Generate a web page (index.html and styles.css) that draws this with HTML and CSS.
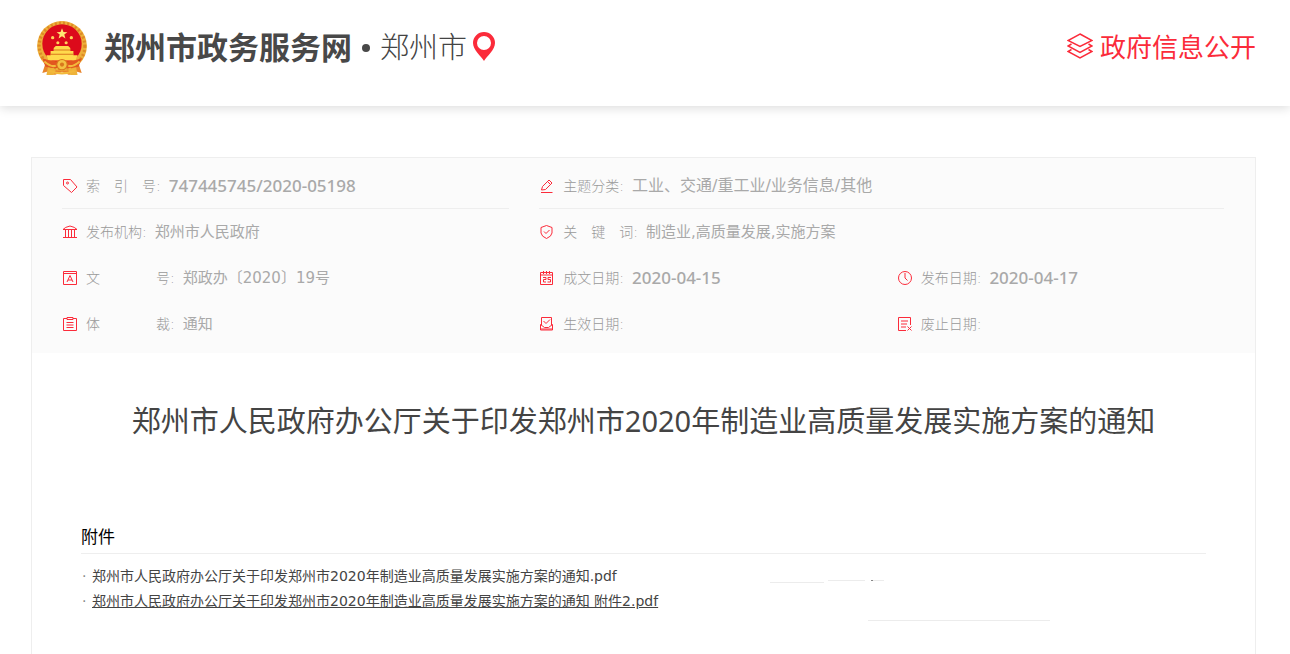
FILE: index.html
```html
<!DOCTYPE html>
<html lang="zh-CN">
<head>
    <meta charset="UTF-8">
    <meta name="viewport" content="width=device-width, initial-scale=1.0">
    <title>郑州市政务服务网</title>
    <link rel="stylesheet" href="styles.css">
</head>
<body>

    <header class="header">
        <div class="brand">
            <svg class="emblem" viewBox="0 0 50 54">
                <path d="M10 39 L6 51 L14 49 L18 53 L25 50 L32 53 L36 49 L44 51 L40 39Z" fill="#e8842a"/>
                <path d="M12 42 L10 53 H17 L20 46 M38 42 L40 53 H33 L30 46" fill="#eeb33a"/>
                <circle cx="25" cy="25" r="24" fill="#eeb03a"/>
                <circle cx="25" cy="25" r="22" fill="none" stroke="#de8a26" stroke-width="3" stroke-dasharray="2 2"/>
                <circle cx="25" cy="23" r="19" fill="#dc0a1b"/>
                <path d="M25 8 l1.4 3.6 3.8.1-3 2.4 1.1 3.7-3.3-2.1-3.3 2.1 1.1-3.7-3-2.4 3.8-.1z" fill="#ffe873"/>
                <g fill="#ffd35a">
                    <circle cx="16" cy="17" r="1.6"/>
                    <circle cx="34" cy="17" r="1.6"/>
                    <circle cx="21" cy="22" r="1.5"/>
                    <circle cx="29" cy="22" r="1.5"/>
                </g>
                <path d="M17 27 L19 25 H31 L33 27 V30 H36 V34 H40 L38 39 H12 L10 34 H14 V30 H17Z" fill="#ffda4c"/>
                <path d="M17 29 H33 M14 33 H36" stroke="#d9781c" stroke-width="1"/>
                <path d="M6 37 Q16 41 25 39 Q34 41 44 37 L41 45 Q33 47 25 46 Q17 47 9 45Z" fill="#e2571f"/>
                <circle cx="25" cy="43" r="5" fill="#f4c143" stroke="#d9781c"/>
                <circle cx="25" cy="43" r="2" fill="#d9781c"/>
                <path d="M8 40 Q15 46 19 44 M42 40 Q35 46 31 44 M13 49 Q25 54 37 49" stroke="#f2b93c" stroke-width="2" fill="none"/>
            </svg>
            <h1 class="site-name">郑州市政务服务网</h1>
            <span class="dot"></span>
            <span class="city">郑州市</span>
            <svg class="pin" viewBox="0 0 22 29">
                <path fill="#fb2b3a" fill-rule="evenodd" d="M11 0 A11 11 0 0 0 0 11 C0 18 8 24 11 29 C14 24 22 18 22 11 A11 11 0 0 0 11 0Z M11 4 A7 7 0 1 1 11 18 A7 7 0 1 1 11 4Z"/>
            </svg>
        </div>
        <a class="open-info" href="#">
            <svg class="layers" viewBox="0 0 26 26">
                <path d="M13 1 L25 7.5 L13 13.500 L1 7.500Z M4.500 11 L1 13 L13 19.500 L25 13 L21.500 11 M4.500 16.500 L1 18.500 L13 25 L25 18.500 L21.500 16.500"/>
            </svg>
            政府信息公开
        </a>
    </header>

    <main class="doc">
        <dl class="info">
            <div class="item line">
                <svg class="icon" viewBox="0 0 16 16"><path d="M1.500 1.500 H8.500 L15 9 L9.500 14.500 L1.500 7.500Z"/><circle cx="5.500" cy="5" r="1"/></svg>
                <dt>索&emsp;引&emsp;号:</dt>
                <dd class="num">747445745/2020-05198</dd>
            </div>
            <div class="item line span">
                <svg class="icon" viewBox="0 0 16 16"><path d="M2.500 12 L3.500 8.500 L10 2 L13 5 L6.500 11.500Z M8.500 3.500 L11.500 6.500 M2 14.500 H13.500"/></svg>
                <dt>主题分类:</dt>
                <dd class="wide">工业、交通/重工业/业务信息/其他</dd>
            </div>
            <div class="item">
                <svg class="icon" viewBox="0 0 16 16"><path d="M1 5.500 Q3 3 8 2 Q13 3 15 5.500Z M3.500 6 V13 M6.500 6 V13 M9.500 6 V13 M12.500 6 V13 M1 13.500 H15"/></svg>
                <dt>发布机构:</dt>
                <dd>郑州市人民政府</dd>
            </div>
            <div class="item span">
                <svg class="icon" viewBox="0 0 16 16"><path d="M7.500 1.500 L13 3.500 V9 Q12.500 12.500 7.500 14.500 Q2.500 12.500 2 9 V3.500Z M5 7.500 L7 9.500 L10.500 6"/></svg>
                <dt>关&emsp;键&emsp;词:</dt>
                <dd>制造业,高质量发展,实施方案</dd>
            </div>
            <div class="item">
                <svg class="icon" viewBox="0 0 16 16"><path d="M1.500 1.500 H14.500 V14.500 H1.500Z M2 3.500 H14 M5 12 L8 5.500 L11 12 M6 10 H10"/></svg>
                <dt>文&emsp;&emsp;&emsp;&emsp;号:</dt>
                <dd>郑政办〔2020〕19号</dd>
            </div>
            <div class="item">
                <svg class="icon" viewBox="0 0 16 16"><path d="M1.500 2.500 H13.500 V14.500 H1.500Z M1.500 5 H13.500 M4.500 1 V4 M7.500 1 V4 M10.500 1 V4 M4 7.500 H7 V9.500 H4.500 V12 H7 M12 7.500 H9 V9.500 H11.500 V12 H8.500"/></svg>
                <dt>成文日期:</dt>
                <dd class="num">2020-04-15</dd>
            </div>
            <div class="item">
                <svg class="icon" viewBox="0 0 16 16"><circle cx="8" cy="8" r="6.500"/><path d="M8 3 V8 L10.500 10.500"/></svg>
                <dt>发布日期:</dt>
                <dd class="num">2020-04-17</dd>
            </div>
            <div class="item">
                <svg class="icon" viewBox="0 0 16 16"><path d="M5 2.500 H1.500 V14.500 H14.500 V2.500 H11 M5 1.500 H11 V3.500 H5Z M4.500 6.500 H11.500 M4.500 9 H11.500 M4.500 11.500 H11.500"/></svg>
                <dt>体&emsp;&emsp;&emsp;&emsp;裁:</dt>
                <dd>通知</dd>
            </div>
            <div class="item">
                <svg class="icon" viewBox="0 0 16 16"><path d="M2.500 9 V1.500 H12.500 V9 M4.500 5 L7 7.500 L11 3.500 M1.500 8.500 V14 H13.500 V8.500 L9.500 11.500 H5.500Z M2 13 H13"/></svg>
                <dt>生效日期:</dt>
                <dd></dd>
            </div>
            <div class="item">
                <svg class="icon" viewBox="0 0 16 16"><path d="M9 14.500 H1.500 V1.500 H13.500 V9 M4 5 H11 M4 8 H10 M4 11 H9 M10.500 10.500 L14.500 14.500 M14.500 10.500 L10.500 14.500"/></svg>
                <dt>废止日期:</dt>
                <dd></dd>
            </div>
        </dl>

        <h2 class="title">郑州市人民政府办公厅关于印发郑州市2020年制造业高质量发展实施方案的通知</h2>

        <section class="attach">
            <h3>附件</h3>
            <div class="attach-body">
                <ul>
                    <li><a href="#">郑州市人民政府办公厅关于印发郑州市2020年制造业高质量发展实施方案的通知.pdf</a></li>
                    <li><a class="active" href="#">郑州市人民政府办公厅关于印发郑州市2020年制造业高质量发展实施方案的通知 附件2.pdf</a></li>
                </ul>
                <svg class="strokes" viewBox="0 0 282 58">
                    <path d="M0 18.500 H54 M58 16.500 H95 M102 16.500 H114 M98 56.500 H280" stroke="#ececec"/>
                    <path d="M101 16.500 H103" stroke="#888"/>
                </svg>
            </div>
        </section>
    </main>

</body>
</html>
```
FILE: styles.css
```css
* {
    box-sizing: border-box;
    margin: 0;
    padding: 0;
}

body {
    display: flex;
    flex-direction: column;
    min-height: 100vh;
    background: #fff;
    color: #444;
    font-family: "DejaVu Sans", "Noto Sans CJK SC", sans-serif;
}

svg {
    flex: none;
}

a {
    color: inherit;
    text-decoration: none;
}

/* header */
.header {
    display: flex;
    justify-content: space-between;
    height: 106px;
    padding: 20px 34px 0 36px;
    box-shadow: 0 2px 10px rgba(0, 0, 0, 0.14);
}

.brand,
.open-info {
    display: flex;
    align-items: center;
    height: 56px;
}

.emblem {
    width: 52px;
    height: 56px;
    margin-right: 16px;
}

.site-name {
    font-size: 31px;
    line-height: 56px;
    font-weight: bold;
    color: #484848;
}

.dot {
    width: 8px;
    height: 8px;
    margin: 0 10px;
    border-radius: 50%;
    background: #484848;
}

.city {
    font-size: 29px;
    line-height: 56px;
    font-weight: 300;
}

.pin {
    width: 22px;
    height: 29px;
    margin-left: 6px;
    margin-bottom: 4px;
}

.open-info {
    gap: 7px;
    font-size: 26px;
    line-height: 56px;
    color: #fb2b3a;
}

.layers {
    width: 26px;
    height: 26px;
    margin-bottom: 4px;
    fill: none;
    stroke: #fb2b3a;
    stroke-width: 1.5;
}

/* document */
.doc {
    flex: 1;
    margin: 51px 34px 0 31px;
    border: 1px solid #eee;
    border-bottom: 0;
}

.info {
    display: grid;
    grid-template-columns: 41fr 30fr 30fr;
    column-gap: 30px;
    padding: 5px 31px 6px 30px;
    background: #fbfbfb;
    color: #a9a9a9;
}

.item {
    display: flex;
    align-items: center;
    height: 46px;
    line-height: 24px;
}

.item.line {
    border-bottom: 1px solid #eee;
}

.item.span {
    grid-column: span 2;
}

.icon {
    width: 16px;
    height: 16px;
    margin-right: 8px;
    fill: none;
    stroke: #fb2b3a;
}

dt {
    margin-right: 8px;
    font-size: 14px;
    font-weight: 300;
    color: #999;
}

dd {
    font-size: 15px;
}

dd.wide {
    font-size: 16px;
}

dd.num {
    font-family: "Noto Sans", sans-serif;
    font-size: 17px;
    font-weight: 500;
}

.title {
    padding: 46px 20px 0;
    font-family: "Noto Sans", "Noto Sans CJK SC", sans-serif;
    font-size: 29px;
    line-height: 44px;
    font-weight: normal;
    text-align: center;
}

.attach {
    margin: 80px 49px 0;
}

.attach h3 {
    padding-bottom: 2px;
    border-bottom: 1px solid #eee;
    font-size: 17px;
    line-height: 28px;
    font-weight: normal;
    color: #000;
}

.attach-body {
    display: flex;
    justify-content: space-between;
    padding: 10px 154px 0 0;
}

.attach ul {
    list-style: none;
}

.attach li {
    font-size: 14px;
    line-height: 25px;
}

.attach li::before {
    content: "·";
    display: inline-block;
    width: 10px;
    padding-left: 1px;
    color: #888;
}

.attach a.active {
    text-decoration: underline;
    text-underline-offset: 1px;
}

.strokes {
    width: 282px;
    height: 58px;
    fill: none;
}
```
